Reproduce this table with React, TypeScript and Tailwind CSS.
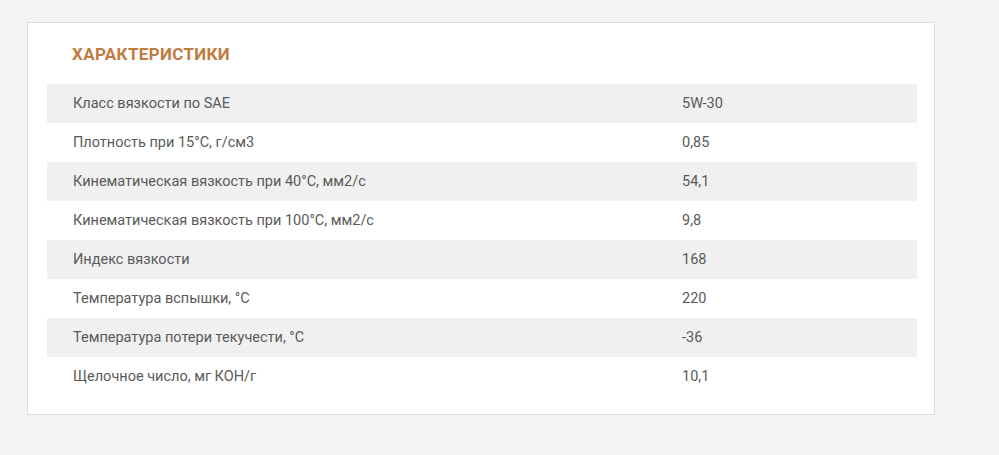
const specs: [string, string][] = [
  ['Класс вязкости по SAE', '5W-30'],
  ['Плотность при 15°C, г/см3', '0,85'],
  ['Кинематическая вязкость при 40°C, мм2/с', '54,1'],
  ['Кинематическая вязкость при 100°C, мм2/с', '9,8'],
  ['Индекс вязкости', '168'],
  ['Температура вспышки, °C', '220'],
  ['Температура потери текучести, °C', '-36'],
  ['Щелочное число, мг КОН/г', '10,1'],
];

export default function App() {
  return (
    <div className="min-h-[455px] bg-[#f3f3f3] pt-[22px] pl-[27px] font-['Roboto',sans-serif]">
      <div className="w-[908px] bg-white border border-[#dedede] pl-[19px] pr-[17px] pb-[18px]">
        {/* Header */}
        <h2 className="h-[61px] pt-[20px] pl-[25px] text-[17px] leading-[22px] font-bold text-[#c27a3f] uppercase tracking-[0.02em]">
          Характеристики
        </h2>

        {/* Specs */}
        <table className="w-full border-collapse">
          <tbody>
            {specs.map(([label, value], i) => (
              <tr key={label} className={i % 2 === 0 ? 'bg-[#f0f0f0]' : 'bg-white'}>
                <td className="w-[70%] h-[39px] pl-[26px] text-[14.5px] text-[#5a5a5a]">{label}</td>
                <td className="h-[39px] pl-[26px] text-[14.5px] text-[#5a5a5a]">{value}</td>
              </tr>
            ))}
          </tbody>
        </table>
      </div>
    </div>
  );
}
